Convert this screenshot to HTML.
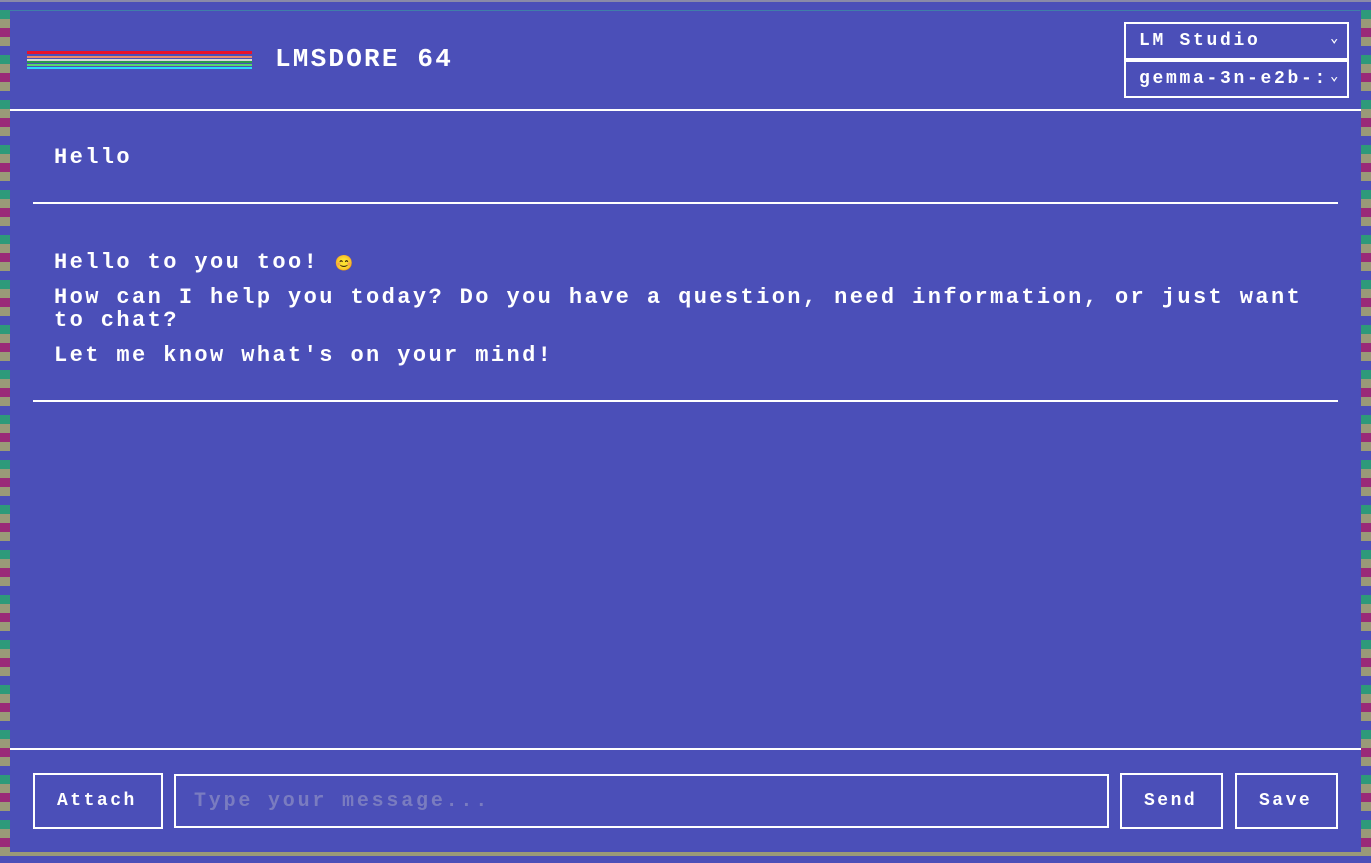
<!DOCTYPE html>
<html><head><meta charset="utf-8"><style>
*{margin:0;padding:0;box-sizing:border-box}
body{width:1371px;height:863px;background:#4b4fb8;position:relative;overflow:hidden;font-family:"Liberation Mono",monospace;font-weight:bold;color:#fff}
.topline{position:absolute;left:0;top:0;width:1371px;height:2px;background:#8a8aa8}
.tealline{position:absolute;left:10px;top:10px;width:1350px;height:1px;background:#3f7fa8}
.side{position:absolute;top:10px;width:10px;height:842px;background:repeating-linear-gradient(to bottom,#2e9a7a 0 9px,#9a9a78 9px 18px,#9a2a78 18px 27px,#9a9a78 27px 36px,#4b4fb8 36px 45px)}
.bot{position:absolute;left:0;top:852px;width:1371px;height:4px;background:#9a9a78}
.hline{position:absolute;height:2px;background:#fff}
.stripe{position:absolute;left:27px;width:225px;height:2px}
.t{position:absolute;white-space:nowrap}
.box{position:absolute;border:2px solid #fff}
.msg{font-size:22px;letter-spacing:2.4px}
</style></head><body>
<div class="topline"></div><div class="tealline"></div>
<div class="side" style="left:0"></div><div class="side" style="left:1361px"></div>
<div class="bot"></div>
<div class="stripe" style="top:51px;height:3px;background:#e8122a"></div>
<div class="stripe" style="top:56px;background:#e88a6a"></div>
<div class="stripe" style="top:59px;background:#d8d8d8"></div>
<div class="stripe" style="top:61px;background:#2a9a4a"></div>
<div class="stripe" style="top:64px;background:#5ad86a"></div>
<div class="stripe" style="top:67px;background:#2ad8f8"></div>
<div class="t" style="left:275px;top:44px;font-size:26px;letter-spacing:2.2px">LMSDORE 64</div>
<div class="box" style="left:1124px;top:22px;width:225px;height:38px"></div>
<div class="t" style="left:1139px;top:31px;font-size:18px;letter-spacing:2.7px">LM Studio</div>
<div class="t" style="left:1330px;top:30px;font-size:14px">⌄</div>
<div class="box" style="left:1124px;top:60px;width:225px;height:38px"></div>
<div class="t" style="left:1139px;top:69px;font-size:18px;letter-spacing:2.7px">gemma-3n-e2b-:</div>
<div class="t" style="left:1330px;top:68px;font-size:14px">⌄</div>
<div class="hline" style="left:10px;top:109px;width:1351px"></div>
<div class="t msg" style="left:54px;top:145px">Hello</div>
<div class="hline" style="left:33px;top:202px;width:1305px"></div>
<div class="t msg" style="left:54px;top:250px">Hello to you too! <span style="font-size:15px">😊</span></div>
<div class="t msg" style="left:54px;top:285px">How can I help you today? Do you have a question, need information, or just want</div>
<div class="t msg" style="left:54px;top:308px">to chat?</div>
<div class="t msg" style="left:54px;top:343px">Let me know what's on your mind!</div>
<div class="hline" style="left:33px;top:400px;width:1305px"></div>
<div class="hline" style="left:10px;top:748px;width:1351px"></div>
<div class="box" style="left:33px;top:773px;width:130px;height:56px"></div>
<div class="t" style="left:57px;top:791px;font-size:18px;letter-spacing:2.5px">Attach</div>
<div class="box" style="left:174px;top:774px;width:935px;height:54px"></div>
<div class="t" style="left:194px;top:790px;font-size:20px;letter-spacing:2.8px;color:#7a7cc0">Type your message...</div>
<div class="box" style="left:1120px;top:773px;width:103px;height:56px"></div>
<div class="t" style="left:1144px;top:791px;font-size:18px;letter-spacing:2.5px">Send</div>
<div class="box" style="left:1235px;top:773px;width:103px;height:56px"></div>
<div class="t" style="left:1259px;top:791px;font-size:18px;letter-spacing:2.5px">Save</div>
</body></html>
